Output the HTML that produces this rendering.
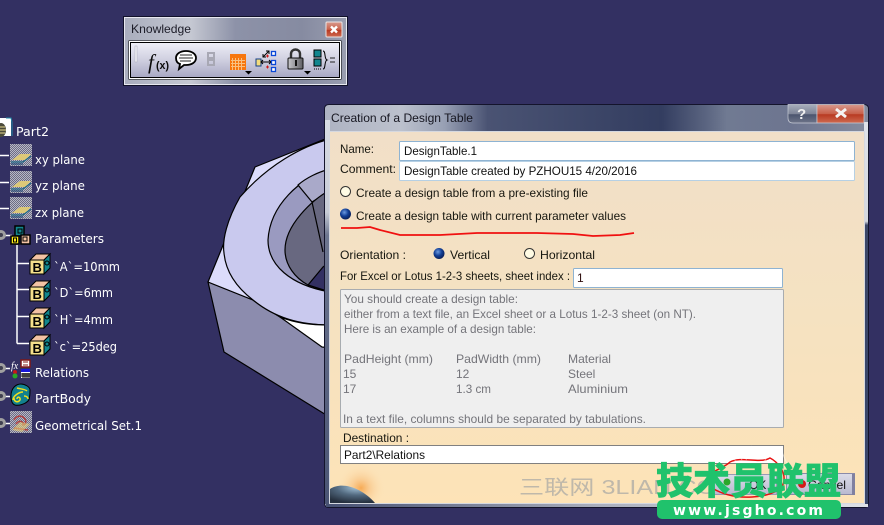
<!DOCTYPE html>
<html><head><meta charset="utf-8"><title>Creation of a Design Table</title>
<style>
html,body{margin:0;padding:0;background:#333062;width:884px;height:525px;overflow:hidden}
svg{display:block}
text{font-family:"Liberation Sans","Noto Sans CJK SC",sans-serif;font-size:12px}
.t{font-family:"DejaVu Sans",sans-serif;font-size:12px;fill:#fff}
.d{fill:#16160f}
.g{fill:#74747a}
</style></head><body>
<svg xmlns="http://www.w3.org/2000/svg" width="884" height="525" viewBox="0 0 884 525">
<defs>
<linearGradient id="tb" x1="0" x2="1" y1="0" y2="0"><stop offset="0" stop-color="#a9adbd"/><stop offset=".3" stop-color="#c5c8d2"/><stop offset=".5" stop-color="#8d92a8"/><stop offset=".8" stop-color="#868ba1"/><stop offset="1" stop-color="#9a9eb0"/></linearGradient>
<linearGradient id="tbar" x1="0" x2="0" y1="0" y2="1"><stop offset="0" stop-color="#eeeef6"/><stop offset=".5" stop-color="#cfcfe0"/><stop offset="1" stop-color="#a9a9c4"/></linearGradient>
<linearGradient id="red" x1="0" x2="0" y1="0" y2="1"><stop offset="0" stop-color="#d99a8e"/><stop offset=".5" stop-color="#c8604a"/><stop offset=".55" stop-color="#b83a22"/><stop offset="1" stop-color="#cf6a50"/></linearGradient>
<linearGradient id="dt" x1="0" x2="1" y1="0" y2="0"><stop offset="0" stop-color="#aeb3c2"/><stop offset=".14" stop-color="#bcc1cd"/><stop offset=".22" stop-color="#98a0b4"/><stop offset=".3" stop-color="#4a5373"/><stop offset=".62" stop-color="#333d60"/><stop offset=".7" stop-color="#5a6480"/><stop offset=".74" stop-color="#707a92"/><stop offset=".86" stop-color="#6d7590"/><stop offset="1" stop-color="#868c9f"/></linearGradient>
<linearGradient id="cl" x1="0" x2="0" y1="0" y2="1"><stop offset="0" stop-color="#f1dfc8"/><stop offset=".5" stop-color="#f5e2c1"/><stop offset="1" stop-color="#fde3b7"/></linearGradient>
<linearGradient id="hp" x1="0" x2="0" y1="0" y2="1"><stop offset="0" stop-color="#a8aebc"/><stop offset=".5" stop-color="#7e8598"/><stop offset=".55" stop-color="#4c556f"/><stop offset="1" stop-color="#6d7489"/></linearGradient>
<linearGradient id="rs" x1="0" x2="0" y1="0" y2="1"><stop offset="0" stop-color="#e0e3ea"/><stop offset=".26" stop-color="#d5d8df"/><stop offset=".27" stop-color="#3c4768"/><stop offset="1" stop-color="#39456a"/></linearGradient>
<linearGradient id="ls" x1="0" x2="0" y1="0" y2="1"><stop offset="0" stop-color="#d8dce4"/><stop offset=".24" stop-color="#c8ccd6"/><stop offset=".3" stop-color="#6d7690"/><stop offset="1" stop-color="#4a5474"/></linearGradient>
<linearGradient id="bs" x1="0" x2="1" y1="0" y2="0"><stop offset="0" stop-color="#465072"/><stop offset=".5" stop-color="#a9aebd"/><stop offset="1" stop-color="#dfe2e8"/></linearGradient>
<linearGradient id="btn" x1="0" x2="0" y1="0" y2="1"><stop offset="0" stop-color="#dcdce8"/><stop offset="1" stop-color="#b9b9d0"/></linearGradient>
<linearGradient id="lk" x1="0" x2="1" y1="0" y2="0"><stop offset="0" stop-color="#c8c8cc"/><stop offset="1" stop-color="#5e5e64"/></linearGradient>
<radialGradient id="glow"><stop offset="0" stop-color="#f7ab55"/><stop offset=".35" stop-color="#f9c88c" stop-opacity=".85"/><stop offset="1" stop-color="#fde3b7" stop-opacity="0"/></radialGradient>
<radialGradient id="earth" cx=".6" cy=".1" r=".9"><stop offset="0" stop-color="#a4c4da"/><stop offset=".5" stop-color="#52697f"/><stop offset="1" stop-color="#26303e"/></radialGradient>
<radialGradient id="rb" cx=".4" cy=".35" r=".7"><stop offset="0" stop-color="#6c9ae0"/><stop offset=".5" stop-color="#123f96"/><stop offset="1" stop-color="#0a1c50"/></radialGradient>
<clipPath id="cc"><rect x="330" y="132" width="534" height="371"/></clipPath>
<pattern id="ck" width="2" height="2" patternUnits="userSpaceOnUse"><rect width="2" height="2" fill="#6c6c84"/><rect width="1" height="1" fill="#b8b8c6"/><rect x="1" y="1" width="1" height="1" fill="#b8b8c6"/></pattern>
<g id="pl"><rect width="22" height="22" fill="url(#ck)"/><path d="M2 16 10 10H21L15 16Z" fill="#dcc878"/><path d="M1 18H13L21 12" fill="none" stroke="#1f6a88" stroke-width="1.200"/><path d="M1 20H13" stroke="#123e70"/></g>
<g id="bx"><path d="M1 8 7 2H21L15 8Z" fill="#f3c3a4" stroke="#000"/><path d="M15 8 21 2V16L15 22Z" fill="#12868e" stroke="#000"/><circle cx="18" cy="11" r="2" fill="none" stroke="#000"/><rect x="1" y="8" width="14" height="14" fill="#f5e08c" stroke="#000"/><text x="3.500" y="20" style="font-size:13px;font-weight:bold;font-family:'Liberation Sans',sans-serif" fill="#000">B</text></g>
<g id="bu"><circle cx="0" cy="0" r="5" fill="#a0a0a0"/><circle cx="0" cy="0" r="2" fill="#404050"/></g>
</defs>
<rect width="884" height="525" fill="#333062"/>

<!-- Knowledge toolbar -->
<rect x="124.500" y="17.500" width="222" height="67" fill="url(#tb)" stroke="#e8e8f0"/>
<rect x="123.500" y="16.500" width="224" height="69" fill="none" stroke="#11112a"/>
<text x="131" y="33" textLength="60" lengthAdjust="spacingAndGlyphs" fill="#1c1c28">Knowledge</text>
<rect x="326" y="22" width="16" height="15" rx="1" fill="url(#red)" stroke="#e9e4e4"/>
<path d="M331 26.500 337 32.500M337 26.500 331 32.500" stroke="#fff" stroke-width="2.400"/>
<rect x="128.500" y="40.500" width="213" height="39" fill="#000"/>
<rect x="129.500" y="41.500" width="211" height="37" fill="none" stroke="#fff"/>
<rect x="131" y="43" width="208" height="34" fill="url(#tbar)"/>
<rect x="135" y="46" width="2" height="16" fill="#f4f4f8" stroke="#a8a8b8" stroke-width=".5"/>
<text x="148" y="69" style="font-family:'Liberation Serif',serif;font-size:21px;font-style:italic" fill="#0a0a0a">f</text>
<text x="156" y="69" style="font-family:'Liberation Sans',sans-serif;font-size:11px;font-weight:bold" fill="#0a0a0a" textLength="13" lengthAdjust="spacingAndGlyphs">(x)</text>
<path d="M186 51c6 0 10 3 10 7s-4 7-10 7h-2l-5 4 1-5c-3-1-4-3-4-6 0-4 4-7 10-7Z" fill="#fff" stroke="#000" stroke-width="1.800"/>
<path d="M180 55h12M179 58h14M180 61h11" stroke="#222"/>
<path d="M208 53h6v5h-6zM208 60h6v5h-6z" fill="none" stroke="#a8a8b4" stroke-width="2"/>
<rect x="230" y="54" width="16" height="16" fill="#f7760d"/>
<path d="M232.500 58v12M235.500 58v12M238.500 58v12M241.500 58v12M231 60.500h14M231 63.500h14M231 66.500h14" stroke="#f9c080"/>
<path d="M245 71h7l-3.500 3.500Z" fill="#000"/>
<rect x="256" y="59" width="5" height="7" fill="#f3dc7c" stroke="#123e88"/>
<path d="M262 62h9M263 60l-2 2 2 2M269 60l2 2-2 2M263 57l6-6M263 54v3h3M266 51h3v3" stroke="#000" fill="none"/>
<rect x="271.500" y="51.500" width="4" height="4" fill="#fff" stroke="#0a48d8" stroke-width="1.300"/>
<rect x="271.500" y="60.500" width="4" height="4" fill="#fff" stroke="#0a48d8" stroke-width="1.300"/>
<rect x="271.500" y="67.500" width="4" height="4" fill="#fff" stroke="#0a48d8" stroke-width="1.300"/>
<path d="M266 56h3M267.500 54.500v3M266 67h3M267.500 65.500v3" stroke="#d01818"/>
<path d="M291 58v-4c0-6 9-6 9 0v4" fill="none" stroke="#333" stroke-width="2.400"/>
<rect x="288" y="58" width="15" height="11" rx="1" fill="url(#lk)" stroke="#111"/>
<rect x="295" y="60" width="2" height="6" fill="#111"/>
<path d="M304 71h7l-3.500 3.500Z" fill="#000"/>
<rect x="314" y="50" width="7" height="7" fill="#12868e" stroke="#000"/>
<rect x="314" y="59" width="7" height="7" fill="#12868e" stroke="#000"/>
<path d="M314 69h7" stroke="#000" stroke-dasharray="1 1"/>
<path d="M323 51c3 0 1 8 4 9-3 1-1 9-4 9" fill="none" stroke="#000"/>
<path d="M330 58h5M330 62h5" stroke="#222"/>

<!-- tree -->
<rect x="0" y="118" width="11" height="18" fill="#fff"/>
<path d="M6 118h5l1 4v14" fill="none" stroke="#1e88a8"/>
<ellipse cx="1" cy="130" rx="5" ry="7" fill="#4a4a3a"/>
<path d="M0 127h5M0 130h6M0 133h5" stroke="#e8d890"/>
<text class="t" x="16" y="136" textLength="33" lengthAdjust="spacingAndGlyphs">Part2</text>
<path d="M0 155.500H9M0 182.500H9M0 208.500H9M4 235.500H12M17 245V343.500M17 263.500H29M17 289.500H29M17 316.500H29M17 343.500H29M0 368.500H10M0 396.500H10M0 423.500H10" stroke="#fff" stroke-width="1.500" fill="none"/>
<use href="#pl" x="10" y="144"/><use href="#pl" x="10" y="171"/><use href="#pl" x="10" y="197"/>
<text class="t" x="35" y="164" textLength="50" lengthAdjust="spacingAndGlyphs">xy plane</text>
<text class="t" x="35" y="190" textLength="50" lengthAdjust="spacingAndGlyphs">yz plane</text>
<text class="t" x="35" y="217" textLength="49" lengthAdjust="spacingAndGlyphs">zx plane</text>
<use href="#bu" x="1" y="235"/><use href="#bu" x="1" y="368"/><use href="#bu" x="1" y="396"/><use href="#bu" x="1" y="423"/>
<rect x="15" y="226" width="9" height="10" fill="#12868e" stroke="#000" stroke-width="1.500"/>
<rect x="11" y="236" width="8" height="8" fill="#f8e818" stroke="#000" stroke-width="1.500"/>
<rect x="21" y="235" width="9" height="9" fill="#f3c3a4" stroke="#000" stroke-width="1.500"/>
<rect x="18" y="229" width="4" height="4" fill="none" stroke="#000"/><rect x="13.500" y="238" width="3" height="4" fill="none" stroke="#000"/><rect x="23" y="237" width="4" height="4" fill="none" stroke="#000"/>
<text class="t" x="35" y="243" textLength="69" lengthAdjust="spacingAndGlyphs">Parameters</text>
<use href="#bx" x="29" y="252"/><use href="#bx" x="29" y="279"/><use href="#bx" x="29" y="306"/><use href="#bx" x="29" y="333"/>
<text class="t" x="54" y="271" textLength="66" lengthAdjust="spacingAndGlyphs">`A`=10mm</text>
<text class="t" x="54" y="297" textLength="59" lengthAdjust="spacingAndGlyphs">`D`=6mm</text>
<text class="t" x="54" y="324" textLength="59" lengthAdjust="spacingAndGlyphs">`H`=4mm</text>
<text class="t" x="54" y="351" textLength="63" lengthAdjust="spacingAndGlyphs">`c`=25deg</text>
<text x="11" y="369" style="font-family:'Liberation Serif',serif;font-size:10px;font-style:italic" fill="#fff">fx</text>
<rect x="21" y="360" width="9" height="7" fill="#fff" stroke="#801818" stroke-width="1.500"/>
<path d="M23 362h5M23 365h5" stroke="#801818"/>
<circle cx="15" cy="372" r="2" fill="#c81818"/><circle cx="15" cy="376" r="2.500" fill="#28a828"/>
<rect x="21" y="369" width="9" height="9" fill="#fff"/><rect x="21" y="369" width="9" height="3" fill="#1818d8"/>
<path d="M23 373v5M25 373v5M27 373v5M29 373v5M21 374h9M21 376h9" stroke="#000"/>
<text class="t" x="35" y="377" textLength="54" lengthAdjust="spacingAndGlyphs">Relations</text>
<path d="M11 396c0-8 5-12 10-12 4 0 9 3 9 6 0 3 0 9-2 11-3 3-9 5-13 4-3-1-4-5-4-9Z" fill="#12808e" stroke="#000"/>
<path d="M13 400c0-4 6-8 10-8M17 388c3 1 8 1 10 3M24 396c2 0 4 1 4 3M14 398c0 4 4 5 6 2 1-3-3-4-3-1" fill="none" stroke="#f0e020" stroke-width="1.500"/>
<text class="t" x="35" y="403" textLength="56" lengthAdjust="spacingAndGlyphs">PartBody</text>
<rect x="10" y="411" width="22" height="22" fill="url(#ck)"/>
<path d="M14 420c3-5 8-5 11-1 2 3 0 6-3 6M16 424c3-4 6-3 8 0M14 428l14 2" fill="none" stroke="#b04040" stroke-width="1.500"/>
<path d="M12 430 20 422 30 424 22 432Z" fill="#e6cf78" opacity=".6"/>
<text class="t" x="35" y="430" textLength="107" lengthAdjust="spacingAndGlyphs">Geometrical Set.1</text>

<!-- nut -->
<g stroke="#000" stroke-width="1.200" stroke-linejoin="round">
<path d="M208 282 224 352 323 413 330 417V340L280 317 253 300Z" fill="#8c8cae"/>
<path d="M208 282 255 167 330 137V345L280 317 253 300Z" fill="#dcdcfb"/>
<path d="M330 139C302 146 268 165 240 197 227 220 222 240 224 253 226 275 240 290 253 300 275 318 300 325 330 325Z" fill="#c9c9ee"/>
<path d="M280 317C295 323 310 325 330 325V348L322 347Z" fill="#fff"/>
<path d="M330 169C300 178 270 205 268 240 268 265 290 285 330 292Z" fill="#9a9ac0"/>
<path d="M298 185 312 202C320 197 325 194 330 191V169C318 172 306 178 298 185Z" fill="#a9a9c9"/>
<path d="M330 190C312 200 285 225 285 250 285 265 295 278 308 285L330 292Z" fill="#686880"/>
<path d="M308 285 323 267 330 262V292Z" fill="#333062"/>
<path d="M312 202 323 252" fill="none"/>
</g>

<!-- dialog -->
<path d="M329 104.500H864Q868.500 104.500 868.500 109V503Q868.500 507.500 864 507.500H329Q324.500 507.500 324.500 503V109Q324.500 104.500 329 104.500Z" fill="url(#dt)" stroke="#14142c"/>
<rect x="325" y="120" width="5" height="384" fill="url(#ls)"/>
<rect x="864" y="122" width="4" height="382" fill="url(#rs)"/>
<rect x="326" y="504" width="542" height="3" fill="url(#bs)"/>
<path d="M788 104.500H817V123H793Q788 123 788 118Z" fill="url(#hp)" stroke="#c8ccd6" stroke-width=".7"/>
<path d="M817 104.500H864V123H817Z" fill="url(#red)" stroke="#c8ccd6" stroke-width=".7"/>
<text x="797" y="119" style="font-size:15px;font-weight:bold" fill="#f0f0f0">?</text>
<path d="M836 109 846 117M846 109 836 117" stroke="#f4f4f4" stroke-width="3"/>
<text x="331" y="122" textLength="142" lengthAdjust="spacingAndGlyphs" fill="#161620">Creation of a Design Table</text>
<rect x="329.500" y="131.500" width="535" height="372" fill="url(#cl)" stroke="#d5d8e0"/>

<text class="d" x="340" y="153" textLength="34" lengthAdjust="spacingAndGlyphs">Name:</text>
<text class="d" x="340" y="173" textLength="56" lengthAdjust="spacingAndGlyphs">Comment:</text>
<rect x="399.500" y="141.500" width="455" height="19" rx="1" fill="#fff" stroke="#8eb3d2"/>
<rect x="399.500" y="161.500" width="455" height="19" rx="1" fill="#fff" stroke="#b6d0e4"/>
<text x="404" y="155" textLength="73" lengthAdjust="spacingAndGlyphs" fill="#111">DesignTable.1</text>
<text x="404" y="175" textLength="233" lengthAdjust="spacingAndGlyphs" fill="#111">DesignTable created by PZHOU15 4/20/2016</text>

<circle cx="345.500" cy="191.500" r="5" fill="#fffbe4" stroke="#333"/>
<text class="d" x="356" y="197" textLength="232" lengthAdjust="spacingAndGlyphs">Create a design table from a pre-existing file</text>
<circle cx="345.500" cy="214" r="5.500" fill="url(#rb)"/>
<text class="d" x="356" y="220" textLength="270" lengthAdjust="spacingAndGlyphs">Create a design table with current parameter values</text>
<path d="M341 228 357 228 370 227 380 230 400 235 440 235 477 233 537 233 573 234 593 236 620 235 634 233" fill="none" stroke="#f01010" stroke-width="1.800"/>

<text class="d" x="340" y="259" textLength="66" lengthAdjust="spacingAndGlyphs">Orientation :</text>
<circle cx="439" cy="253.500" r="5.500" fill="url(#rb)"/>
<text class="d" x="450" y="259" textLength="40" lengthAdjust="spacingAndGlyphs">Vertical</text>
<circle cx="529.500" cy="253.500" r="5" fill="#fffbe4" stroke="#333"/>
<text class="d" x="540" y="259" textLength="55" lengthAdjust="spacingAndGlyphs">Horizontal</text>
<text class="d" x="340" y="280" textLength="230" lengthAdjust="spacingAndGlyphs">For Excel or Lotus 1-2-3 sheets, sheet index :</text>
<rect x="573.500" y="268.500" width="209" height="19" rx="1" fill="#fff" stroke="#8eb3d2"/>
<text x="577" y="282" fill="#301010">1</text>

<rect x="340.500" y="289.500" width="443" height="138" rx="1" fill="#efefef" stroke="#a8acb0"/>
<text class="g" x="344" y="303" textLength="174" lengthAdjust="spacingAndGlyphs">You should create a design table:</text>
<text class="g" x="344" y="318" textLength="352" lengthAdjust="spacingAndGlyphs">either from a text file, an Excel sheet or a Lotus 1-2-3 sheet (on NT).</text>
<text class="g" x="344" y="333" textLength="192" lengthAdjust="spacingAndGlyphs">Here is an example of a design table:</text>
<text class="g" x="344" y="363" textLength="89" lengthAdjust="spacingAndGlyphs">PadHeight (mm)</text>
<text class="g" x="456" y="363" textLength="85" lengthAdjust="spacingAndGlyphs">PadWidth (mm)</text>
<text class="g" x="568" y="363" textLength="43" lengthAdjust="spacingAndGlyphs">Material</text>
<text class="g" x="343" y="378">15</text><text class="g" x="456" y="378">12</text>
<text class="g" x="568" y="378">Steel</text>
<text class="g" x="343" y="393">17</text>
<text class="g" x="456" y="393" textLength="35" lengthAdjust="spacingAndGlyphs">1.3 cm</text>
<text class="g" x="568" y="393" textLength="60" lengthAdjust="spacingAndGlyphs">Aluminium</text>
<text class="g" x="343" y="423" textLength="303" lengthAdjust="spacingAndGlyphs">In a text file, columns should be separated by tabulations.</text>

<text class="d" x="343" y="442" textLength="66" lengthAdjust="spacingAndGlyphs">Destination :</text>
<rect x="340.500" y="445.500" width="443" height="18" fill="#fff" stroke="#808080"/>
<text x="344" y="459" textLength="81" lengthAdjust="spacingAndGlyphs" fill="#111">Part2\Relations</text>

<g clip-path="url(#cc)">
<circle cx="361" cy="488" r="24" fill="url(#glow)"/>
<path d="M330 489C342 481 362 488 375 503H330Z" fill="url(#earth)"/>
</g>

<text x="519" y="494" style="font-size:20px" fill="#bfb8aa" textLength="218" lengthAdjust="spacingAndGlyphs">三联网 3LIAN.COM</text>

<!-- buttons -->
<rect x="712.500" y="474.500" width="64" height="20" fill="url(#btn)" stroke="#9a9ab4"/>
<circle cx="727" cy="482" r="3.500" fill="#2aa82a"/>
<text x="749" y="489" fill="#111">OK</text>
<rect x="786.500" y="473.500" width="68" height="21" fill="url(#btn)" stroke="#8a8aa8"/>
<rect x="852" y="474" width="3" height="21" fill="#8080a0"/>
<circle cx="802" cy="484" r="4" fill="#d81818"/>
<text x="808" y="489" textLength="38" lengthAdjust="spacingAndGlyphs" fill="#111">Cancel</text>
<path d="M707 482C708 470 722 470 730 462 742 456 760 464 770 458 778 462 785 472 784 480 784 490 770 496 752 497 736 498 722 494 712 488Z" fill="none" stroke="#e81010" stroke-width="1.500"/>
<path d="M722 452 738 462M734 447 742 460M752 446 746 460M770 452 764 462M787 464 782 452" stroke="#fff" opacity=".45" fill="none"/>

<!-- watermark -->
<text x="656" y="494" style="font-family:'Noto Sans CJK SC',sans-serif;font-size:37px;font-weight:900" fill="#20c26c" stroke="#20c26c" stroke-width=".6" textLength="185" lengthAdjust="spacingAndGlyphs">技术员联盟</text>
<rect x="657" y="500" width="184" height="19" rx="5" fill="#20c26c"/>
<text x="673" y="515" style="font-family:'DejaVu Sans',sans-serif;font-size:14px;font-weight:bold" fill="#fff" textLength="150" lengthAdjust="spacing">www.jsgho.com</text>
</svg>
</body></html>
